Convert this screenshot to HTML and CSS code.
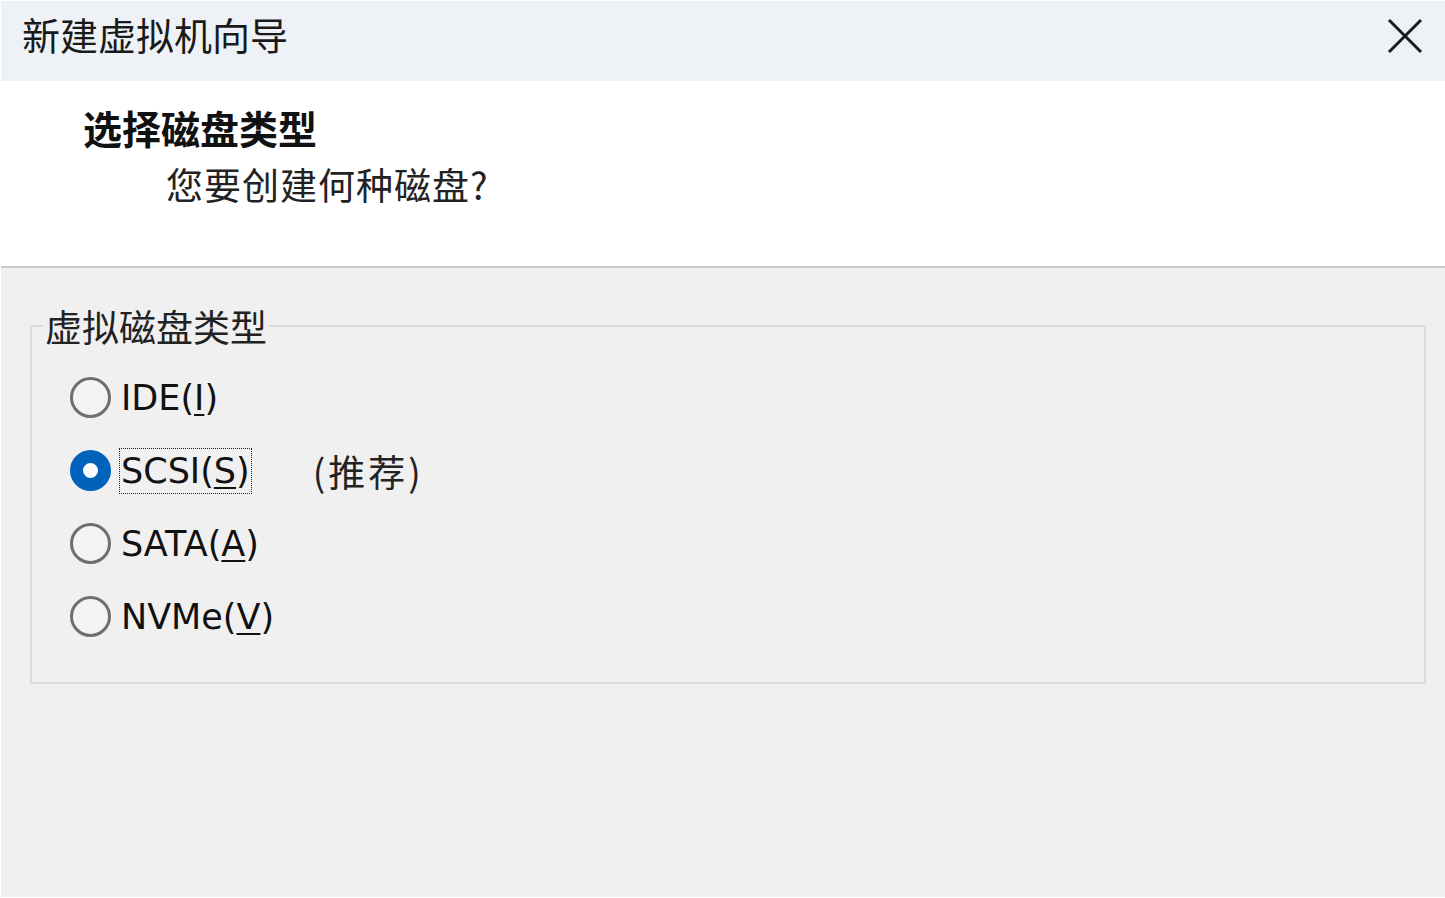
FILE: index.html
```html
<!DOCTYPE html>
<html lang="zh-CN">
<head>
<meta charset="utf-8">
<title>新建虚拟机向导</title>
<link rel="stylesheet" href="styles.css">
</head>
<body>
<div class="window">
  <div class="titlebar">
    <span class="title">新建虚拟机向导</span>
    <button class="close" aria-label="关闭">
      <svg width="36" height="36" viewBox="0 0 36 36"><path d="M2 2 L34 34 M34 2 L2 34" stroke="#1a1a1a" stroke-width="3" fill="none"/></svg>
    </button>
  </div>
  <div class="header">
    <div class="h-title">选择磁盘类型</div>
    <div class="h-sub">您要创建何种磁盘?</div>
  </div>
  <div class="body">
    <fieldset class="group">
      <legend class="legend">虚拟磁盘类型</legend>
      <div class="options">
        <label class="opt"><span class="radio"></span><span class="lbl">IDE(<u>I</u>)</span></label>
        <label class="opt"><span class="radio on"></span><span class="lbl focus">SCSI(<u>S</u>)</span><span class="rec">(推荐)</span></label>
        <label class="opt"><span class="radio"></span><span class="lbl">SATA(<u>A</u>)</span></label>
        <label class="opt"><span class="radio"></span><span class="lbl">NVMe(<u>V</u>)</span></label>
      </div>
    </fieldset>
  </div>
</div>
</body>
</html>
```

FILE: styles.css
```css
* { box-sizing: border-box; }
html, body { margin: 0; padding: 0; }
body {
  width: 1445px;
  height: 898px;
  background: #ffffff;
  font-family: "Noto Sans CJK SC", sans-serif;
  overflow: hidden;
}
.window {
  width: 1445px;
  height: 898px;
  display: flex;
  flex-direction: column;
  padding: 1px 0 1px 1px;
}
.titlebar {
  height: 80px;
  background: #eef2f7;
  display: flex;
  align-items: center;
  justify-content: space-between;
  padding: 0 22px 0 21px;
  flex: none;
}
.title {
  font-size: 38px;
  color: #1a1a1a;
  line-height: 1;
  margin-top: -14px;
}
.close {
  background: none;
  border: 0;
  padding: 0;
  width: 36px;
  height: 36px;
  margin-top: -10px;
  display: flex;
}
.header {
  height: 187px;
  background: #ffffff;
  border-bottom: 2px solid #c8c8c8;
  flex: none;
  padding: 24px 0 0 82px;
}
.h-title {
  font-size: 39px;
  font-weight: 700;
  color: #111;
  line-height: 44px;
}
.h-sub {
  font-size: 37px;
  color: #222;
  line-height: 44px;
  letter-spacing: 1px;
  margin: 13px 0 0 83px;
}
.body {
  flex: 1;
  background: #f0f0f0;
  padding: 38px 19px 0 29px;
}
.group {
  margin: 0;
  border: 2px solid #dcdcdc;
  padding: 0;
  height: 378px;
}
.legend {
  font-size: 37px;
  color: #222;
  padding: 0 2px;
  margin-left: 11px;
  line-height: 40px;
}
.options {
  display: flex;
  flex-direction: column;
  gap: 32px;
  padding: 31px 0 0 38px;
}
.opt {
  display: flex;
  align-items: center;
  height: 41px;
  font-family: "DejaVu Sans", sans-serif;
  font-size: 35px;
  color: #111;
}
.radio {
  width: 41px;
  height: 41px;
  border-radius: 50%;
  border: 3px solid #6e6e6e;
  background: #f3f3f3;
  flex: none;
  margin-right: 9px;
}
.radio.on {
  border: 13px solid #0062bb;
  background: #ffffff;
}
.lbl {
  letter-spacing: 0;
  padding: 2px 1px;
  line-height: 40px;
}
.lbl u { text-decoration-thickness: 2px; text-underline-offset: 4px; }
.focus {
  outline: 1px dotted #222;
  outline-offset: 0;
}
.rec {
  font-family: "Noto Sans CJK SC", sans-serif;
  color: #222;
  margin-left: 62px;
  font-size: 37px;
  letter-spacing: 3px;
}
```
